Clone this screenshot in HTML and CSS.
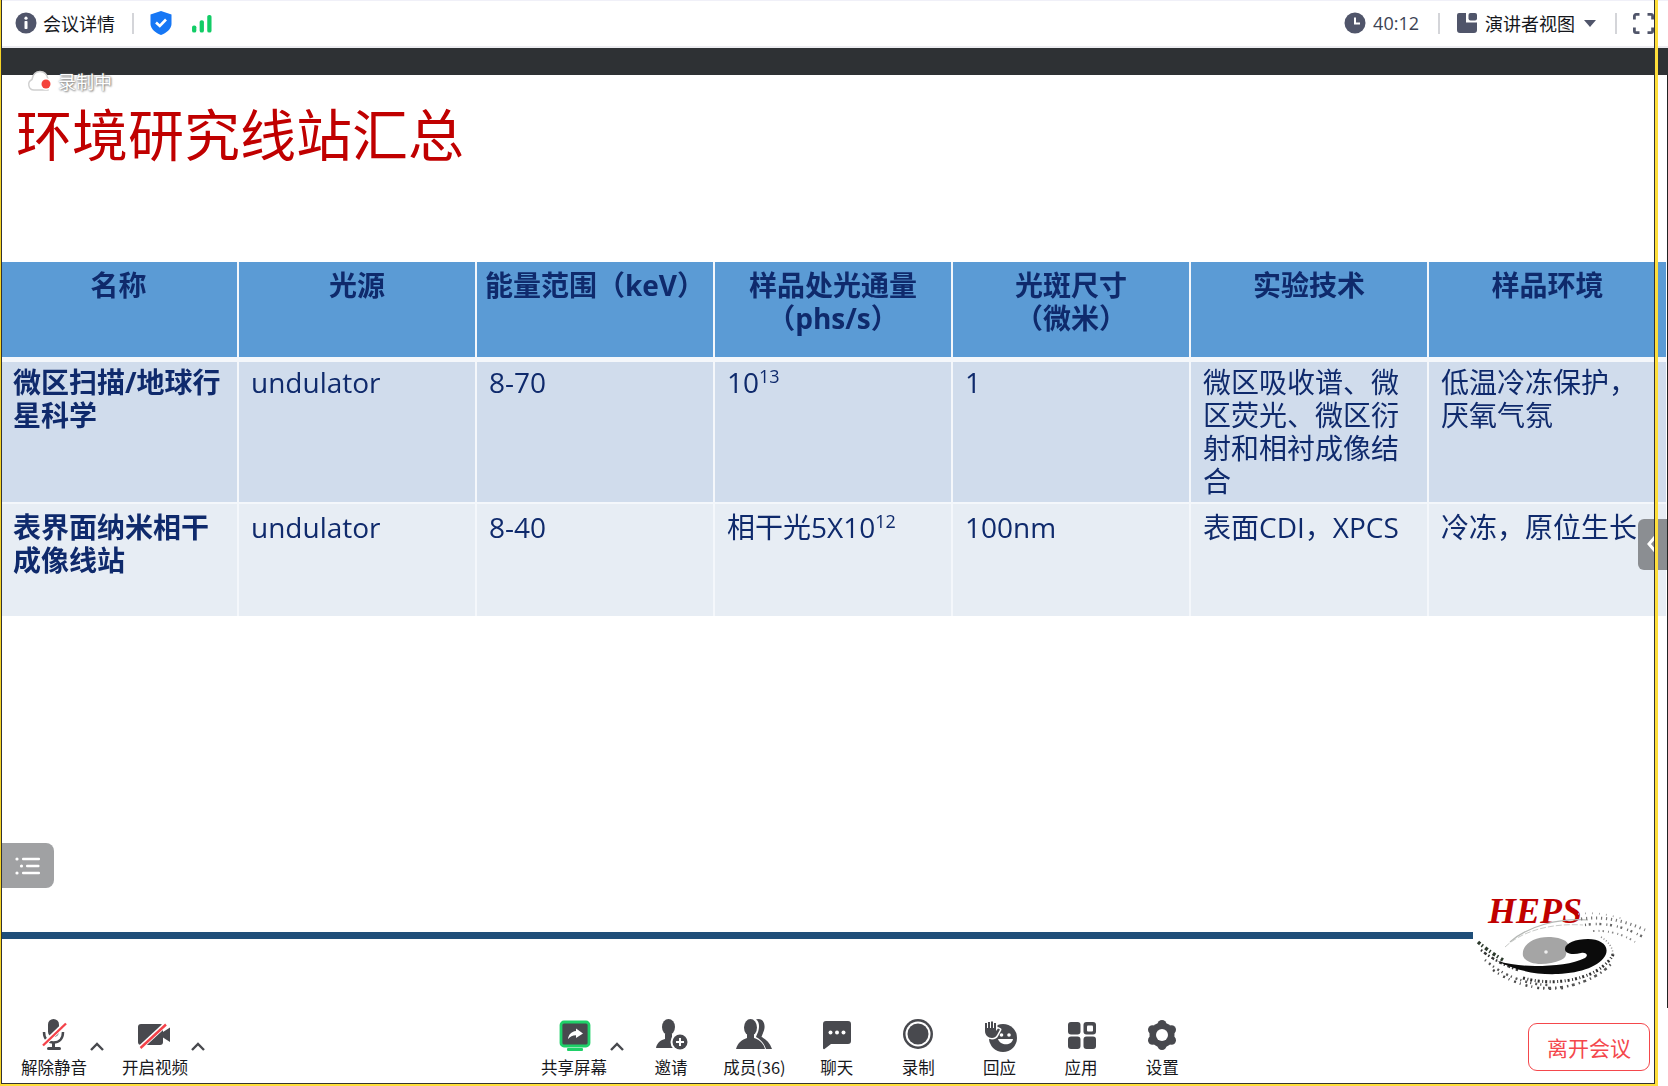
FILE: index.html
```html
<!DOCTYPE html>
<html lang="zh-CN">
<head>
<meta charset="utf-8">
<title>会议详情</title>
<link rel="stylesheet" href="styles.css">
</head>
<body>
<div class="app">
  <header class="topbar">
    <div class="top-group">
      <svg class="ico-i" viewBox="0 0 22 22"><circle cx="11" cy="11" r="10.5" fill="#50556a"/><circle cx="11" cy="6.2" r="1.6" fill="#fff"/><rect x="9.5" y="9" width="3" height="8" rx=".8" fill="#fff"/></svg>
      <span class="top-text first">会议详情</span>
      <i class="top-divider d1"></i>
      <svg class="ico-shield" viewBox="0 0 22 24"><path d="M11 0 21.5 3.500V13C21.500 18 16 22 11 24 6 22 .5 18 .5 13V3.500Z" fill="#1677f5"/><path d="M6 11.500 9.800 15 16 8.500" fill="none" stroke="#fff" stroke-width="2.600"/></svg>
      <svg class="ico-bars" viewBox="0 0 22 20"><rect x="0" y="12" width="4.500" height="7.500" rx="2" fill="#12cc66"/><rect x="8" y="6.500" width="4.500" height="13" rx="2" fill="#12cc66"/><rect x="16" y="1" width="4.500" height="18.500" rx="2" fill="#12cc66"/></svg>
    </div>
    <div class="top-group">
      <svg class="ico-i" viewBox="0 0 22 22"><circle cx="11" cy="11" r="10.500" fill="#50556a"/><path d="M11 5.500V11.500H16" fill="none" stroke="#fff" stroke-width="2"/></svg>
      <span class="top-text timer">40:12</span>
      <i class="top-divider d2"></i>
      <svg class="ico-view" viewBox="0 0 20 20"><path d="M2 0H9V9.500H20V17A3 3 0 0 1 17 20H3A3 3 0 0 1 0 17V2A2 2 0 0 1 2 0Z" fill="#50556a"/><rect x="11.500" y="0" width="8.500" height="7.500" rx="2" fill="#50556a"/></svg>
      <span class="top-text">演讲者视图</span>
      <svg class="ico-caret" viewBox="0 0 12 7"><path d="M0 0H12L6 7Z" fill="#50556a"/></svg>
      <i class="top-divider d3"></i>
      <svg class="ico-full" viewBox="0 0 21 21" fill="none" stroke="#50556a" stroke-width="2.800"><path d="M1.400 6.500V3A1.600 1.600 0 0 1 3 1.400H6.500M14.500 1.400H18A1.600 1.600 0 0 1 19.600 3V6.500M19.600 14.500V18A1.600 1.600 0 0 1 18 19.600H14.500M6.500 19.600H3A1.600 1.600 0 0 1 1.400 18V14.500"/></svg>
    </div>
  </header>
  <div class="darkbar"></div>

  <main class="slide">
    <h1 class="title">环境研究线站汇总</h1>
    <table class="grid">
      <thead>
        <tr class="head">
          <th>名称</th><th>光源</th><th>能量范围（keV）</th><th>样品处光通量<br>（phs/s）</th><th>光斑尺寸<br>（微米）</th><th>实验技术</th><th>样品环境</th>
        </tr>
      </thead>
      <tbody>
        <tr class="row-a">
          <td class="name">微区扫描/地球行星科学</td><td>undulator</td><td>8-70</td><td>10<sup>13</sup></td><td>1</td><td>微区吸收谱、微区荧光、微区衍射和相衬成像结合</td><td>低温冷冻保护，厌氧气氛</td>
        </tr>
        <tr class="row-b">
          <td class="name">表界面纳米相干成像线站</td><td>undulator</td><td>8-40</td><td>相干光5X10<sup>12</sup></td><td>100nm</td><td>表面CDI，XPCS</td><td>冷冻，原位生长</td>
        </tr>
      </tbody>
    </table>
    <div class="slide-foot">
      <div class="rule"></div>
      <svg class="logo" viewBox="0 -4 190 124">
        <text x="15" y="31" class="logo-text">HEPS</text>
        <g fill="none">
          <path d="M37 50C55 34 85 26 115 28" stroke="#b5b8b5" stroke-width="1.200"/>
          <path d="M32 55C50 38 80 31 110 33" stroke="#c8cac8" stroke-width="1" stroke-dasharray="6 2"/>
          <path d="M108 27C130 24 150 28 172 38" stroke="#777" stroke-width="3" stroke-dasharray="1.200 3.800"/>
          <path d="M112 33C132 30 150 34 170 45" stroke="#666" stroke-width="2.500" stroke-dasharray="1 2.700 2 5"/>
          <path d="M120 39C135 38 150 42 162 50" stroke="#888" stroke-width="2" stroke-dasharray="1.500 4 1 3"/>
          <path d="M105 22C120 20 135 22 150 27" stroke="#aaa" stroke-width="1.800" stroke-dasharray="1 6"/>
          <path d="M5 50C12 56 20 62 30 68" stroke="#2c3a2c" stroke-width="3.500" stroke-dasharray="3 2 1.500 3"/>
          <path d="M8 58C18 66 30 73 45 78" stroke="#333" stroke-width="2.500" stroke-dasharray="1.500 2.500 3 2"/>
          <path d="M12 68C28 82 50 92 75 93" stroke="#555" stroke-width="2.500" stroke-dasharray="1.200 4 2 3"/>
          <path d="M20 78C40 92 65 99 90 96" stroke="#444" stroke-width="2.500" stroke-dasharray="2 4 1 5"/>
          <path d="M50 86C75 93 105 90 125 78 134 72 139 66 141 60" stroke="#2f2f2f" stroke-width="3" stroke-dasharray="2 2.500 1 2"/>
          <path d="M70 96C100 97 125 86 138 72" stroke="#555" stroke-width="2.500" stroke-dasharray="1.500 3.500 3 4"/>
          <path d="M128 45C136 50 140 56 140 63" stroke="#888" stroke-width="1.500" stroke-dasharray="1 2"/>
        </g>
        <path d="M50 64C48 52 62 44 78 45 90 46 97 50 95 55 92 61 95 65 88 68 74 74 54 74 50 64Z" fill="#a5a5a5"/>
        <circle cx="73" cy="60" r="1.800" fill="#eee"/>
        <path d="M24 69C42 78 62 83 85 82 108 81 128 74 133 62 136 53 127 47 115 47 103 47 92 51 92 57 92 62 100 63 108 61 113 60 116 63 112 66 100 72 82 74 62 74 48 74 36 72 24 69Z" fill="#0b0b0b"/>
      </svg>
    </div>
  </main>

  <footer class="toolbar">
    <div class="tool-group">
      <div class="tool">
        <svg class="tool-ico" viewBox="0 0 36 36"><rect x="12" y="1" width="11" height="18" rx="5.500" fill="#48494e"/><path d="M8 14C8 21 12 24.500 17.500 24.500S27 21 27 14" fill="none" stroke="#48494e" stroke-width="2.500"/><rect x="16" y="24" width="3" height="6" fill="#48494e"/><rect x="11" y="29" width="14" height="3" rx="1.500" fill="#48494e"/><path d="M7 27 30 5" stroke="#fff" stroke-width="5"/><path d="M7 27.500 30 5.500" stroke="#f4434a" stroke-width="2.400"/></svg>
        <span>解除静音</span>
      </div>
      <svg class="chev" viewBox="0 0 14 9"><path d="M1 8 7 2 13 8" fill="none" stroke="#48494e" stroke-width="2.400"/></svg>
      <div class="tool tool-video">
        <svg class="tool-ico" viewBox="0 0 36 36"><rect x="1" y="6" width="25" height="21" rx="3" fill="#48494e"/><path d="M26 14 33 9.500V24L26 19.500Z" fill="#48494e"/><path d="M3 30 29 6" stroke="#fff" stroke-width="5"/><path d="M3.500 30 29 6.500" stroke="#f4434a" stroke-width="2.400"/></svg>
        <span>开启视频</span>
      </div>
      <svg class="chev" viewBox="0 0 14 9"><path d="M1 8 7 2 13 8" fill="none" stroke="#48494e" stroke-width="2.400"/></svg>
    </div>
    <div class="tool-group center">
      <div class="tool">
        <svg class="tool-ico" viewBox="0 0 36 36"><rect x="5" y="4" width="28" height="24" rx="3" fill="#48494e" stroke="#1fd068" stroke-width="2.800"/><rect x="11" y="30" width="16" height="3" rx="1" fill="#1fd068"/><path d="M20 10.500 27 15.500 20 20V17.200C16.500 17.200 14 18.500 12 21 12.500 17 15 13.500 20 13Z" fill="#fff"/></svg>
        <span>共享屏幕</span>
      </div>
      <svg class="chev" viewBox="0 0 14 9"><path d="M1 8 7 2 13 8" fill="none" stroke="#48494e" stroke-width="2.400"/></svg>
      <div class="tool-row">
        <div class="tool">
          <svg class="tool-ico" viewBox="0 0 36 36"><ellipse cx="15.500" cy="9" rx="6.500" ry="8" fill="#48494e"/><path d="M12 16H19V21C24 22 26 24 27 30H3C4 24.500 8 22 12 21Z" fill="#48494e"/><circle cx="27" cy="24" r="9.500" fill="#fff"/><circle cx="27" cy="24" r="7.500" fill="#48494e"/><path d="M27 20V28M23 24H31" stroke="#fff" stroke-width="2"/></svg>
          <span>邀请</span>
        </div>
        <div class="tool tool-members">
          <svg class="tool-ico" viewBox="0 0 36 36"><path d="M22 1C27 1 29 5 28.500 10 28 14 26 16.500 25.500 19 30 21 34 25 36 31H30C28 25 24 21 20 19 21.500 15 23 13 23 8 23 6 22.500 3 20 1.500Z" fill="#48494e"/><ellipse cx="14.500" cy="9.500" rx="6.500" ry="8.500" fill="#48494e"/><path d="M11 16H18V20C23 21.500 27 24.500 29 31H0C2 24.500 6 21.500 11 20Z" fill="#48494e"/></svg>
          <span>成员(36)</span>
        </div>
        <div class="tool">
          <svg class="tool-ico" viewBox="0 0 36 36"><path d="M7 3H29A3 3 0 0 1 32 6V23A3 3 0 0 1 29 26H12L5.500 31C4.800 31.500 4 31 4 30V6A3 3 0 0 1 7 3Z" fill="#48494e"/><circle cx="11.500" cy="14.500" r="2" fill="#fff"/><circle cx="18" cy="14.500" r="2" fill="#fff"/><circle cx="24.500" cy="14.500" r="2" fill="#fff"/></svg>
          <span>聊天</span>
        </div>
        <div class="tool">
          <svg class="tool-ico" viewBox="0 0 36 36"><circle cx="18" cy="16" r="15" fill="#48494e"/><circle cx="18" cy="16" r="12.500" fill="#fff"/><circle cx="18" cy="16" r="10.500" fill="#48494e"/></svg>
          <span>录制</span>
        </div>
        <div class="tool">
          <svg class="tool-ico" viewBox="0 0 36 36"><circle cx="21" cy="20" r="14" fill="#48494e"/><path d="M3 5V13C3 17 6 20 10 20 12 20 14 19 15 17L18 11.500 16 10.500 14 13V5H12V10H11V3.500H9V10H8V4H6V10H5V5Z" fill="#48494e" stroke="#fff" stroke-width="3" stroke-linejoin="round" paint-order="stroke"/><circle cx="19.500" cy="17" r="1.800" fill="#fff"/><circle cx="27" cy="17" r="1.800" fill="#fff"/><path d="M16 21H31C30 28 18 28 16 21Z" fill="#fff"/></svg>
          <span>回应</span>
        </div>
        <div class="tool">
          <svg class="tool-ico" viewBox="0 0 36 36"><rect x="5" y="4" width="12.500" height="12.500" rx="3" fill="#48494e"/><rect x="20.500" y="4" width="12.500" height="12.500" rx="3" fill="#48494e"/><rect x="24" y="7.500" width="6" height="6" rx="1" fill="#fff"/><rect x="5" y="18.500" width="12.500" height="12.500" rx="3" fill="#48494e"/><rect x="20.500" y="18.500" width="12.500" height="12.500" rx="3" fill="#48494e"/></svg>
          <span>应用</span>
        </div>
        <div class="tool">
          <svg class="tool-ico" viewBox="0 0 36 36"><circle cx="18" cy="17" r="12.500" fill="#48494e"/><g fill="#48494e"><circle cx="18" cy="6.500" r="4.500"/><circle cx="27.500" cy="11.800" r="4.500"/><circle cx="27.500" cy="22.200" r="4.500"/><circle cx="18" cy="27.500" r="4.500"/><circle cx="8.500" cy="22.200" r="4.500"/><circle cx="8.500" cy="11.800" r="4.500"/></g><circle cx="18" cy="17" r="6" fill="#fff"/></svg>
          <span>设置</span>
        </div>
      </div>
    </div>
    <button class="leave">离开会议</button>
  </footer>

  <div class="rec">
    <svg class="rec-ico" viewBox="0 0 26 22"><path d="M7 20A5.500 5.500 0 0 1 5 9.500C6 4 9.500 1.500 13 1.500S20 4 21 9V20Z" fill="#fff" stroke="#cfcfcf" stroke-width="1.400"/><circle cx="19" cy="14" r="6" fill="#fff"/><circle cx="19" cy="14" r="4.500" fill="#f4433c"/></svg>
    <span>录制中</span>
  </div>
  <div class="list-btn">
    <svg viewBox="0 0 26 20" fill="#fff"><circle cx="2" cy="3" r="1.600"/><rect x="7" y="1.700" width="18" height="2.600" rx="1"/><circle cx="6.500" cy="10" r="1.600"/><rect x="11" y="8.700" width="13.500" height="2.600" rx="1"/><circle cx="2" cy="17" r="1.600"/><rect x="7" y="15.700" width="18" height="2.600" rx="1"/></svg>
  </div>
  <div class="side-tab"><svg viewBox="0 0 10 18"><path d="M8 2 2 9 8 16" fill="none" stroke="#fff" stroke-width="3"/></svg></div>
  <div class="frame"><div class="frame-inner"></div></div>
  <div class="edge"></div>
</div>
</body>
</html>
```

FILE: styles.css
```css
* { box-sizing: border-box; }
html, body { margin: 0; padding: 0; background: #fff; }
body { font-family: "Noto Sans CJK SC", "Noto Sans", sans-serif; }
.app { position: relative; width: 1668px; height: 1086px; overflow: hidden; display: flex; flex-direction: column; background: #fff; }

/* top bar */
.topbar { height: 48px; flex: none; display: flex; justify-content: space-between; align-items: center; padding: 0 14px 1px 15px; border-top: 1px solid #f0f0f8; border-bottom: 2px solid #ececf0; }
.top-group { display: flex; align-items: center; }
.top-text { font-size: 18px; line-height: 24px; color: #15171c; font-family: "Noto Sans CJK SC", sans-serif; }
.top-text.first { margin-left: 6px; }
.top-text.timer { margin-left: 7px; color: #3c4354; font-family: "Open Sans", "Noto Sans CJK SC", sans-serif; }
.ico-i { width: 22px; height: 22px; }
.top-divider { display: block; width: 2px; height: 21px; background: #d4d5d9; }
.top-divider.d1 { margin: 0 16px 0 17px; }
.top-divider.d2 { margin: 0 17px 0 19px; }
.top-divider.d3 { margin: 0 16px 0 19px; width: 2px; }
.ico-shield { width: 22px; height: 24px; }
.ico-bars { width: 21px; height: 19px; margin-left: 20px; }
.ico-view { width: 20px; height: 20px; margin-right: 8px; }
.ico-caret { width: 12px; height: 7px; margin-left: 9px; }
.ico-full { width: 21px; height: 21px; }
.darkbar { height: 27px; flex: none; background: #2e3134; }

/* slide */
.slide { flex: 1; min-height: 0; display: flex; flex-direction: column; }
.title { margin: 22px 0 95px 16px; font-size: 56px; line-height: 70px; font-weight: 400; color: #c00000; filter: blur(.35px); }
.grid { width: 1666px; table-layout: fixed; border-collapse: collapse; color: #0f2a6c; font-family: "Open Sans", "Noto Sans CJK SC", sans-serif; font-size: 28px; line-height: 33px; filter: blur(.35px); }
.grid th, .grid td { vertical-align: top; padding: 4px 10px 0 12px; border-left: 2px solid #f4f7fb; overflow: hidden; }
.grid td:first-child { border-left: 0; padding-left: 13px; }
.grid th { padding: 7px 6px 0; text-align: center; font-weight: 700; }
.grid th:first-child { border-left: 0; }
.head { height: 97px; background: #5b9bd5; }
.row-a { height: 144px; background: #d0dcec; border-top: 5px solid #f4f7fb; }
.row-b { height: 113px; background: #e7edf4; border-top: 2px solid #f4f7fb; }
.row-b td { padding-top: 7px; }
.name { font-weight: 700; }
.grid sup { font-size: 18px; line-height: 0; vertical-align: 10px; }
.slide-foot { margin-top: auto; height: 120px; display: flex; align-items: flex-start; padding-left: 2px; }
.rule { width: 1471px; height: 7px; margin-top: 40px; background: #1f4e79; }
.logo { width: 190px; height: 124px; margin-top: -4px; flex: none; }
.logo-text { font-family: "Liberation Serif", serif; font-style: italic; font-weight: 700; font-size: 36px; fill: #c00000; }

/* toolbar */
.toolbar { height: 74px; flex: none; display: flex; align-items: flex-start; padding: 6px 18px 0 19px; }
.tool-group { display: flex; align-items: flex-start; }
.tool-group.center { margin-left: 334px; }
.tool-row { display: flex; gap: 11.400px; margin-left: 12px; }
.tool { width: 70px; display: flex; flex-direction: column; align-items: center; }
.tool-video { margin-left: 16px; }
.tool-members { margin: 0 1px 0 2px; }
.tool-ico { width: 36px; height: 36px; display: block; }
.tool span { margin-top: 1px; font-size: 16.500px; line-height: 24px; color: #17181c; white-space: nowrap; font-family: "Noto Sans CJK SC", sans-serif; }
.chev { width: 14px; height: 9px; margin: 24px 0 0 1px; flex: none; }
.leave { margin: 5px 0 0 auto; width: 122px; height: 48px; border: 1.500px solid #f4474c; border-radius: 9px; background: #fff; color: #f4474c; font-size: 21px; font-family: "Noto Sans CJK SC", sans-serif; padding: 0; }

/* overlays */
.rec { position: absolute; left: 27px; top: 70px; display: flex; align-items: center; gap: 5px; }
.rec-ico { width: 26px; height: 22px; }
.rec span { font-size: 18px; line-height: 22px; color: #fff; text-shadow: 0 0 2px #777, 1px 1px 2px #888; }
.list-btn { position: absolute; left: 2px; top: 843px; width: 52px; height: 45px; background: #a0a1a3; border-radius: 0 8px 8px 0; display: flex; align-items: center; justify-content: center; }
.list-btn svg { width: 26px; height: 20px; }
.side-tab { position: absolute; right: 0; top: 519px; width: 30px; height: 51px; background: #8b8e92; border-radius: 6px 0 0 6px; padding: 16px 0 0 9px; }
.side-tab svg { display: block; width: 10px; height: 18px; }
.frame { position: absolute; left: 0; top: 0; width: 1658px; height: 1086px; border-left: 1px solid #f5d327; border-right: 3px solid #ffdf3a; border-bottom: 2px solid #ffdf3a; pointer-events: none; }
.frame-inner { width: 100%; height: 100%; border-left: 1px solid #333; border-right: 1px solid #333; border-bottom: 1px solid #333; }
.edge { position: absolute; right: 0; top: 75px; width: 1px; height: 933px; background: #222; }
```
